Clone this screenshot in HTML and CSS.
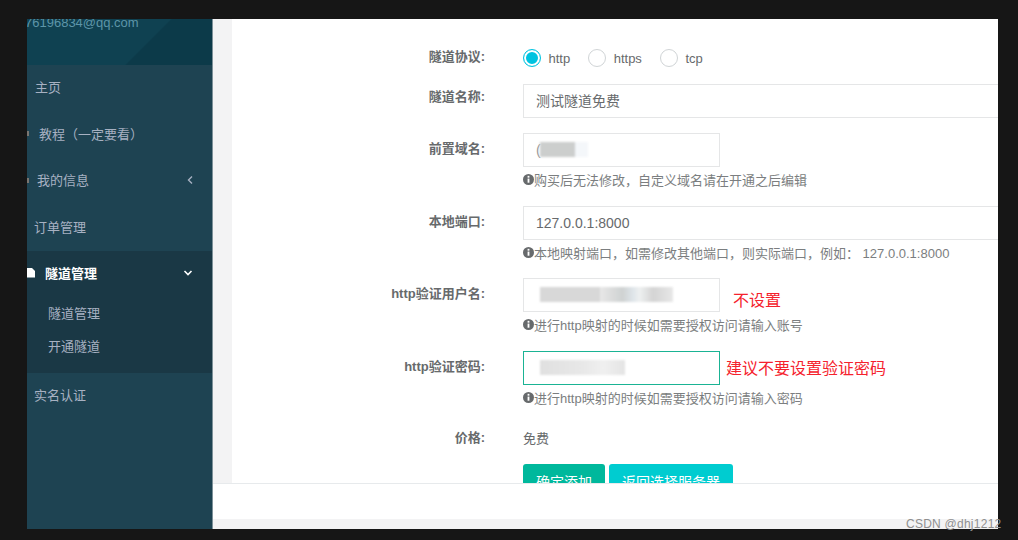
FILE: index.html
```html
<!DOCTYPE html>
<html lang="en">
<head>
  <meta charset="UTF-8">
  <meta name="viewport" content="width=device-width, initial-scale=1.0">
  <title>隧道管理</title>
  <link rel="stylesheet" href="styles.css">
</head>
<body>

  <div class="app">
    <!-- Sidebar -->
    <div class="sidebar">
      <div class="profile"><span class="email">76196834@qq.com</span></div>
      <div class="nav-item nav-home">主页</div>
      <div class="nav-item nav-tutorial"><span class="stub"></span>教程（一定要看）</div>
      <div class="nav-item nav-info"><span class="stub"></span>我的信息
        <svg class="chevron" viewBox="0 0 8 10" width="8" height="10"><path d="M6 1.5 L2.5 5 L6 8.5" fill="none" stroke="#a7b1c2" stroke-width="1.4"/></svg>
      </div>
      <div class="nav-item nav-order">订单管理</div>
      <div class="nav-group">
        <div class="nav-item nav-active">
          <svg class="file-icon" viewBox="0 0 9 10" width="9" height="10"><path d="M0 0 H5 L8 3 V9.5 H0 Z" fill="#fff"/></svg>隧道管理
          <svg class="chevron chevron-down" viewBox="0 0 10 8" width="10" height="8"><path d="M1.5 2 L5 5.5 L8.5 2" fill="none" stroke="#fff" stroke-width="1.6"/></svg>
        </div>
        <div class="sub-item">隧道管理</div>
        <div class="sub-item">开通隧道</div>
      </div>
      <div class="nav-item nav-order nav-last">实名认证</div>
    </div>

    <!-- Main area -->
    <div class="main">
      <div class="content">
        <div class="panel">

          <div class="row row-radio">
            <label class="label">隧道协议:</label>
            <div class="radios">
              <span class="radio on"></span><span class="radio-text">http</span>
              <span class="radio"></span><span class="radio-text">https</span>
              <span class="radio"></span><span class="radio-text">tcp</span>
            </div>
          </div>

          <div class="row row-name">
            <label class="label">隧道名称:</label>
            <div class="input wide">测试隧道免费</div>
          </div>

          <div class="row">
            <label class="label">前置域名:</label>
            <div class="field">
              <div class="input short input-domain"><span class="domain-start">(</span><span class="blur blur-domain"></span></div>
              <div class="help">
                <svg class="info" viewBox="0 0 12 12" width="11" height="11"><circle cx="6" cy="6" r="6" fill="#676a6c"/><rect x="5" y="2" width="2" height="2" fill="#fff"/><rect x="5" y="5" width="2" height="4.5" fill="#fff"/></svg>购买后无法修改，自定义域名请在开通之后编辑
              </div>
            </div>
          </div>

          <div class="row">
            <label class="label">本地端口:</label>
            <div class="field">
              <div class="input wide">127.0.0.1:8000</div>
              <div class="help">
                <svg class="info" viewBox="0 0 12 12" width="11" height="11"><circle cx="6" cy="6" r="6" fill="#676a6c"/><rect x="5" y="2" width="2" height="2" fill="#fff"/><rect x="5" y="5" width="2" height="4.5" fill="#fff"/></svg>本地映射端口，如需修改其他端口，则实际端口，例如： 127.0.0.1:8000
              </div>
            </div>
          </div>

          <div class="row">
            <label class="label">http验证用户名:</label>
            <div class="field">
              <div class="input-line">
                <div class="input short"><span class="blur blur-user"></span></div>
                <span class="note note-user">不设置</span>
              </div>
              <div class="help">
                <svg class="info" viewBox="0 0 12 12" width="11" height="11"><circle cx="6" cy="6" r="6" fill="#676a6c"/><rect x="5" y="2" width="2" height="2" fill="#fff"/><rect x="5" y="5" width="2" height="4.5" fill="#fff"/></svg>进行http映射的时候如需要授权访问请输入账号
              </div>
            </div>
          </div>

          <div class="row">
            <label class="label">http验证密码:</label>
            <div class="field">
              <div class="input-line">
                <div class="input short focus"><span class="blur blur-pass"></span></div>
                <span class="note note-pass">建议不要设置验证密码</span>
              </div>
              <div class="help">
                <svg class="info" viewBox="0 0 12 12" width="11" height="11"><circle cx="6" cy="6" r="6" fill="#676a6c"/><rect x="5" y="2" width="2" height="2" fill="#fff"/><rect x="5" y="5" width="2" height="4.5" fill="#fff"/></svg>进行http映射的时候如需要授权访问请输入密码
              </div>
            </div>
          </div>

          <div class="row row-price">
            <label class="label">价格:</label>
            <div class="price">免费</div>
          </div>

          <div class="buttons">
            <button class="btn btn-green">确定添加</button>
            <button class="btn btn-cyan">返回选择服务器</button>
          </div>

        </div>
      </div>
      <div class="footer"></div>
    </div>
  </div>

  <div class="watermark">CSDN @dhj1212</div>

</body>
</html>
```

FILE: styles.css
```css
body {
  margin: 0;
  width: 1018px;
  height: 540px;
  overflow: hidden;
  background-color: #161616;
  font-family: "Liberation Sans", "Noto Sans CJK SC", sans-serif;
  font-size: 13px;
  color: #676a6c;
}

.app {
  display: flex;
  width: 971px;
  height: 510px;
  margin: 19px 0 0 27px;
}

/* Sidebar */
.sidebar {
  width: 186px;
  flex-shrink: 0;
  background-color: #1e4352;
  border-right: 1px solid #7d9199;
  box-sizing: border-box;
  overflow: hidden;
  color: #a7b1c2;
}

.profile {
  display: flow-root;
  height: 46px;
  background: linear-gradient(135deg, #0f4151 62%, #0c3a49 63%);
  color: #5d95a8;
}

.email {
  display: block;
  margin: -4px 0 0 -2px;
  line-height: 16px;
}

.nav-item {
  display: flex;
  align-items: center;
  height: 46.5px;
  padding-bottom: 2px;
  box-sizing: border-box;
  position: relative;
}

.nav-home {
  height: 44px;
  margin-bottom: 2px;
  padding-left: 8px;
}

.nav-tutorial { padding-left: 12px; }
.nav-info { padding-left: 10px; }
.nav-order { padding-left: 7px; }

.nav-last {
  height: 44px;
  padding-bottom: 0;
}

.stub {
  position: absolute;
  left: 0;
  top: 20px;
  width: 2px;
  height: 5px;
  background-color: #7a7570;
}

.chevron {
  position: absolute;
  left: 159px;
  top: 17px;
}

.chevron-down {
  left: 156px;
  top: 18px;
}

.nav-group {
  background-color: #1a3845;
  height: 122px;
}

.nav-active {
  color: #fff;
  font-weight: bold;
  padding-left: 18px;
}

.file-icon {
  position: absolute;
  left: 0;
  top: 17px;
}

.sub-item {
  height: 33px;
  line-height: 33px;
  padding-left: 21px;
}

/* Main area */
.main {
  flex: 1;
  display: flex;
  flex-direction: column;
  min-width: 0;
  background-color: #f3f3f4;
  padding-bottom: 10px;
  box-sizing: border-box;
}

.content {
  flex: 1;
  min-height: 0;
  padding-left: 19px;
  overflow: hidden;
}

.panel {
  height: 100%;
  background-color: #fff;
  padding-top: 22px;
  box-sizing: border-box;
  overflow: hidden;
}

.footer {
  height: 35px;
  background-color: #fff;
  border-top: 1px solid #e7eaec;
}

/* Form */
.row {
  display: flex;
  align-items: flex-start;
}

.label {
  width: 253px;
  padding-right: 1px;
  margin-right: 37px;
  flex-shrink: 0;
  padding-top: 7px;
  line-height: 18px;
  text-align: right;
  font-weight: bold;
  color: #676a6c;
}

.row-radio {
  height: 43px;
}

.row-name {
  margin-bottom: 15px;
}

.row-name .label {
  padding-top: 4px;
}

.row-price {
  margin-top: -2px;
  height: 42px;
}

.radios {
  display: flex;
  align-items: center;
  height: 34px;
}

.radio {
  width: 18px;
  height: 18px;
  border: 1px solid #d0d4d6;
  border-radius: 50%;
  box-sizing: border-box;
  background-color: #fff;
}

.radio.on {
  border-color: #00c3e0;
  box-shadow: inset 0 0 0 2px #fff, inset 0 0 0 9px #00c3e0;
}

.radio-text {
  margin-left: 7.5px;
  margin-right: 18px;
}

.input {
  height: 34px;
  line-height: 33px;
  padding: 0 12px;
  border: 1px solid #e5e6e7;
  box-sizing: border-box;
  flex-shrink: 0;
  color: #676a6c;
  font-size: 14px;
}

.wide {
  width: 600px;
}

.short {
  width: 197px;
}

.focus {
  border-color: #1ab394;
}

.input-domain {
  display: flex;
}

.domain-start {
  width: 4px;
  color: #999;
}

.input-line {
  display: flex;
  align-items: center;
}

.note {
  margin-left: 6px;
  font-size: 16px;
  color: #f5222d;
}

.note-user {
  margin: 8px 0 0 13px;
}

.note-pass {
  margin-top: -2px;
}

.help {
  display: flex;
  align-items: center;
  height: 18px;
  margin: 3.6px 0 17.07px;
  color: #7b7e80;
  white-space: nowrap;
}

.info {
  flex-shrink: 0;
}

.price {
  line-height: 34px;
}

/* Blurred values */
.blur {
  display: block;
  height: 15px;
  margin: 8px 0 0 4px;
  filter: blur(1px);
}

.blur-domain {
  width: 48px;
  margin-left: 0;
  background: linear-gradient(90deg, #cccecd 0, #cccecd 72%, #f4f7fa 74%);
}

.blur-user {
  width: 133px;
  background: linear-gradient(90deg, #d8d8d8 0, #d8d8d8 45%, #e8e8e8 45%, #cfd2d2 62%, #dfe5ea 70%, #eef0f0 75%, #d4d4d4 85%, #e8e8e8 100%);
}

.blur-pass {
  width: 85px;
  background: linear-gradient(90deg, #e0e0e0 0, #e8e8e8 50%, #f0f0f0 75%, #e4e4e4 100%);
}

/* Buttons, cut off by the footer */
.buttons {
  display: flex;
  gap: 4px;
  margin-left: 291px;
}

.btn {
  height: 34px;
  padding: 0 13px;
  border: 0;
  border-radius: 3px;
  color: #fff;
  font-family: inherit;
  font-size: 14px;
}

.btn-green {
  background-color: #00b89c;
}

.btn-cyan {
  background-color: #00ccd0;
}

.watermark {
  position: absolute;
  left: 906px;
  top: 517px;
  font-size: 12px;
  letter-spacing: 0.25px;
  color: #8f8f8f;
}
```
